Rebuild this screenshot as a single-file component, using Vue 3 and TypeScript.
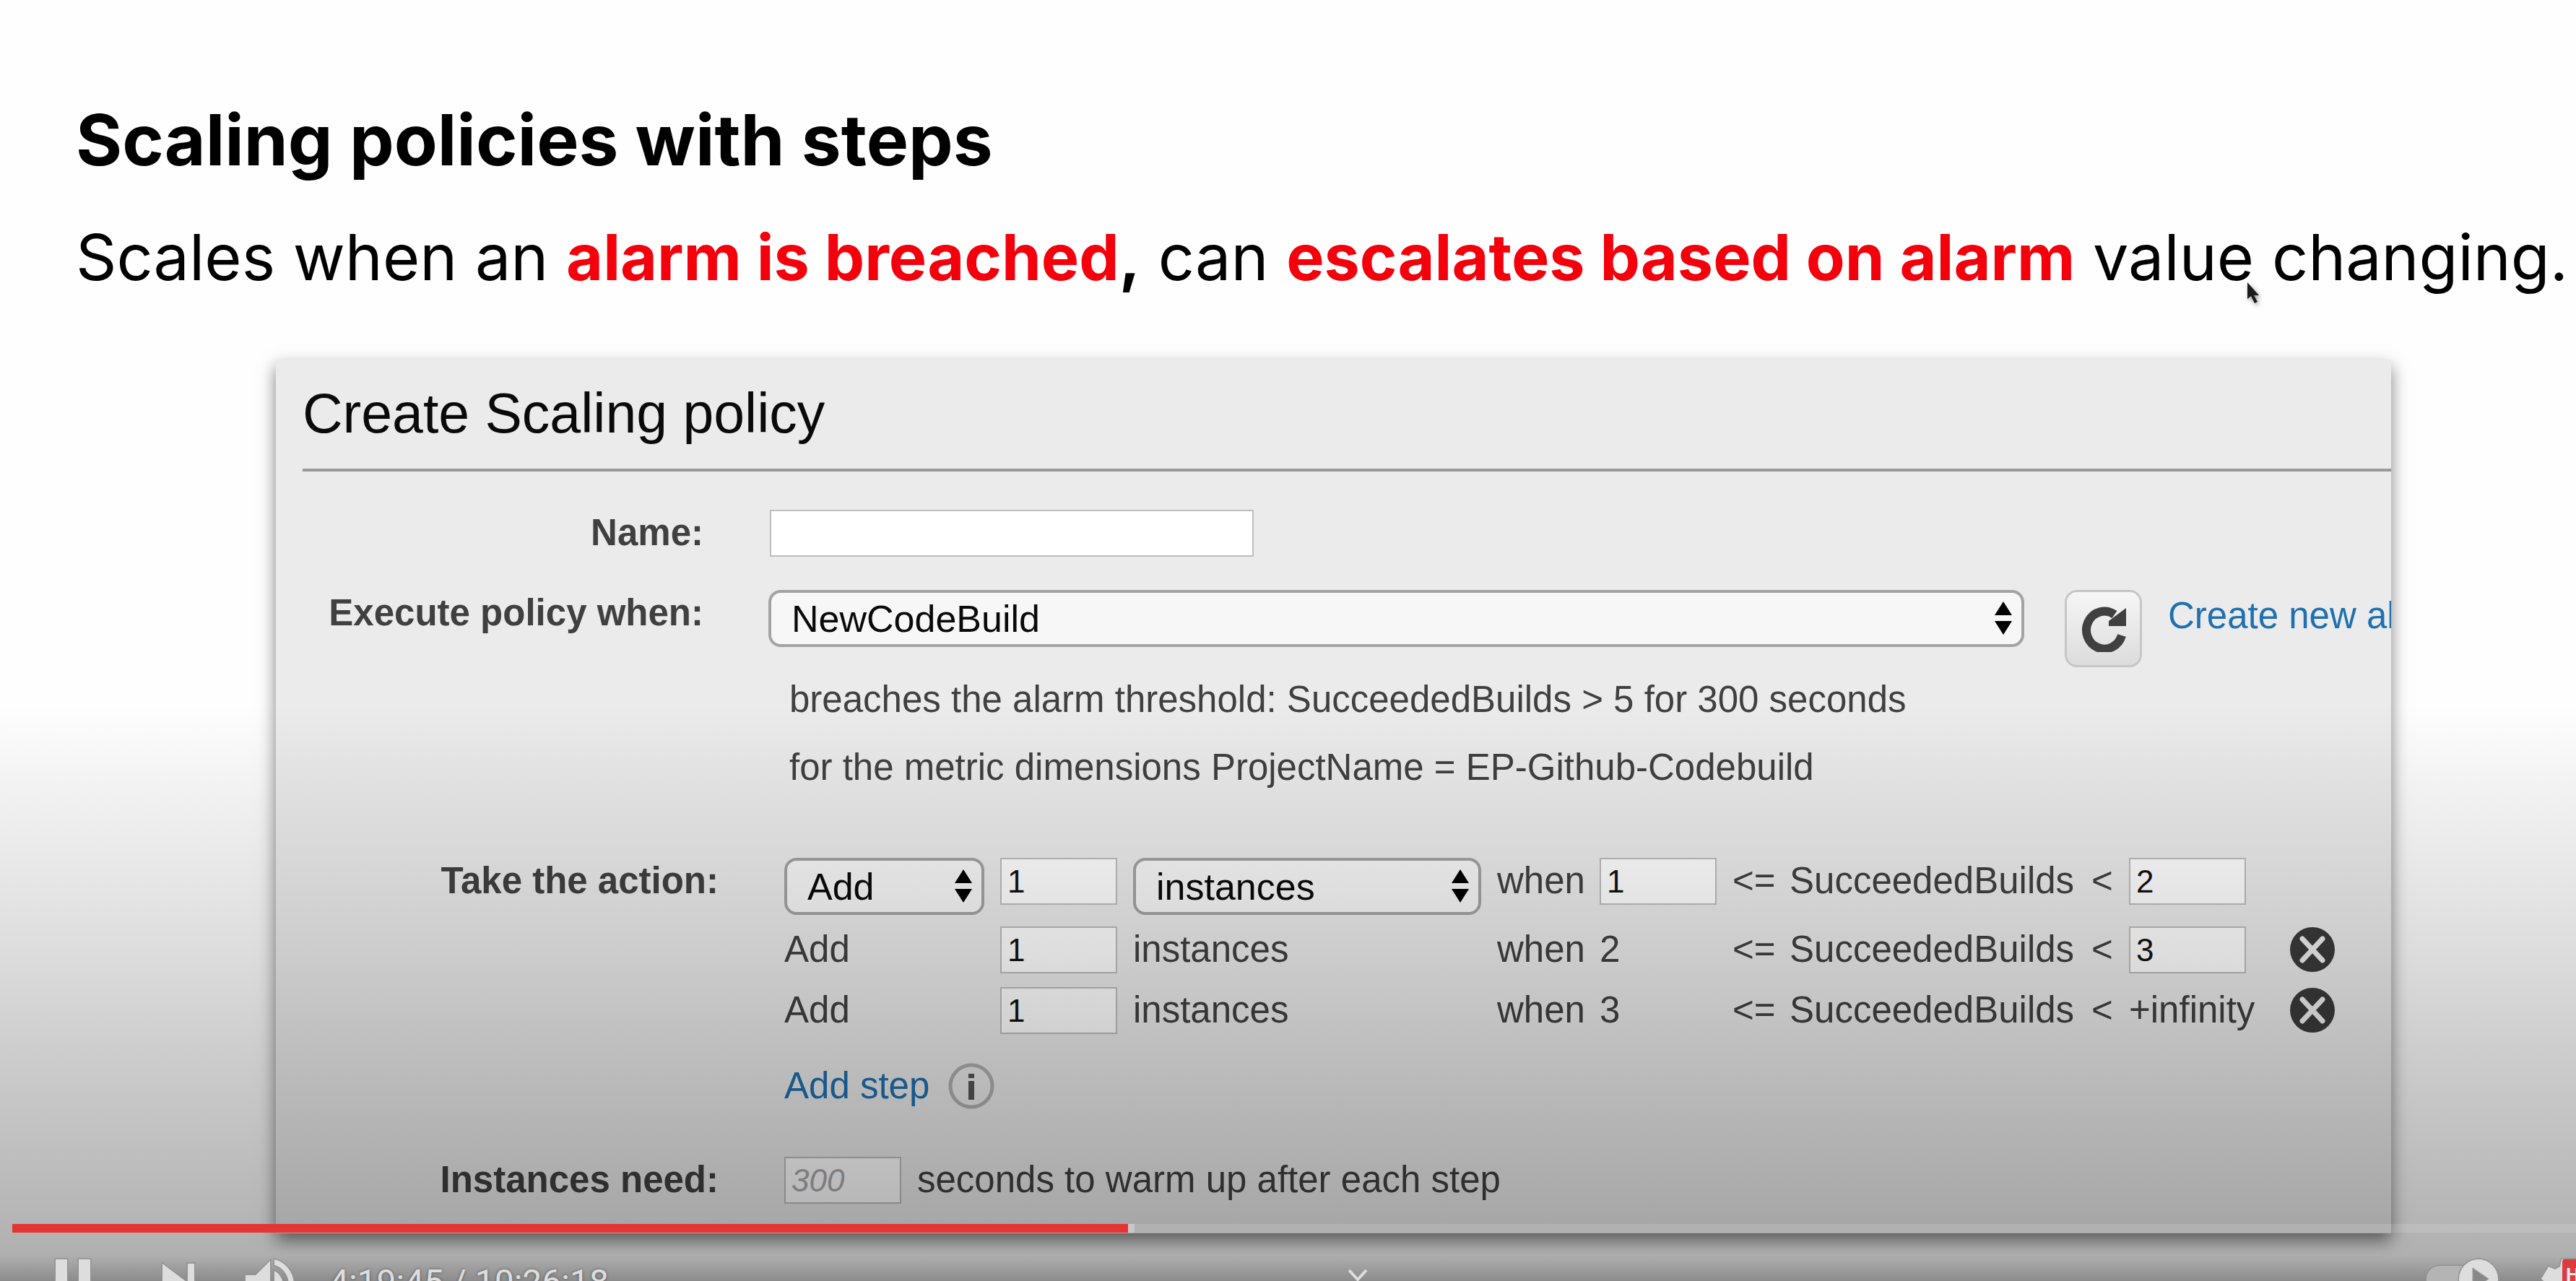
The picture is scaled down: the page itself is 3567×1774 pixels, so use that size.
<script setup lang="ts">
import { ref } from 'vue'

interface Step {
  id: number
  amount: string
  lower: string
  upper: string
  first: boolean
  last: boolean
}

const policyName = ref('')
const alarm = ref('NewCodeBuild')
const action = ref('Add')
const unit = ref('instances')
const warmup = ref('')
const metric = 'SucceededBuilds'

const steps = ref<Step[]>([
  { id: 1, amount: '1', lower: '1', upper: '2', first: true, last: false },
  { id: 2, amount: '1', lower: '2', upper: '3', first: false, last: false },
  { id: 3, amount: '1', lower: '3', upper: '+infinity', first: false, last: true },
])

const played = 43.52
const loaded = 43.77
</script>

<template>
  <main class="player">
    <article class="slide">
      <h1>Scaling policies with steps</h1>
      <p class="lead">
        Scales when an <b class="hot">alarm is breached</b><b>,</b> can
        <b class="hot">escalates based on alarm</b> value changing.
      </p>

      <form class="panel" @submit.prevent>
        <h2>Create Scaling policy</h2>

        <div class="row name-row">
          <label class="label" for="name">Name:</label>
          <input id="name" v-model="policyName" class="box name" type="text" />
        </div>

        <div class="row alarm-row">
          <label class="label" for="alarm">Execute policy when:</label>
          <span class="select alarm">
            <select id="alarm" v-model="alarm"><option>NewCodeBuild</option></select>
            <svg class="arrows" viewBox="0 0 24 46"><path d="M12 0 24 19H0zM12 46 0 27h24z" /></svg>
          </span>
          <button class="refresh" type="button" aria-label="Refresh">
            <svg viewBox="0 0 62 64">
              <path d="M56 41A25 26 0 1 1 46 12" fill="none" stroke="#404040" stroke-width="12" />
              <path d="M62 3v25H38v-7z" fill="#404040" />
            </svg>
          </button>
          <a class="create" href="#">Create new alarm</a>
        </div>

        <div class="details">
          <p>breaches the alarm threshold: SucceededBuilds &gt; 5 for 300 seconds</p>
          <p>for the metric dimensions ProjectName = EP-Github-Codebuild</p>
        </div>

        <div class="row action-row">
          <span class="label wide">Take the action:</span>
          <div class="steps">
            <div v-for="step in steps" :key="step.id" class="step" :class="{ first: step.first }">
              <span v-if="step.first" class="select">
                <select v-model="action" aria-label="Action"><option>Add</option></select>
                <svg class="arrows" viewBox="0 0 24 46"><path d="M12 0 24 19H0zM12 46 0 27h24z" /></svg>
              </span>
              <span v-else>{{ action }}</span>
              <input v-model="step.amount" class="box" type="text" aria-label="Amount" />
              <span v-if="step.first" class="select">
                <select v-model="unit" aria-label="Unit"><option>instances</option></select>
                <svg class="arrows" viewBox="0 0 24 46"><path d="M12 0 24 19H0zM12 46 0 27h24z" /></svg>
              </span>
              <span v-else>{{ unit }}</span>
              <span>when</span>
              <input v-if="step.first" v-model="step.lower" class="box" type="text" aria-label="Lower bound" />
              <span v-else>{{ step.lower }}</span>
              <span>&lt;=</span>
              <span>{{ metric }}</span>
              <span>&lt;</span>
              <span v-if="step.last">{{ step.upper }}</span>
              <input v-else v-model="step.upper" class="box" type="text" aria-label="Upper bound" />
              <button v-if="!step.first" class="remove" type="button" aria-label="Remove step">
                <svg viewBox="0 0 64 64">
                  <circle cx="32" cy="32" r="31" fill="#3a3a3a" />
                  <path d="M18 17 46 47M46 17 18 47" stroke="#eee" stroke-width="7" stroke-linecap="round" />
                </svg>
              </button>
            </div>
          </div>
        </div>

        <div class="add-row">
          <a href="#">Add step</a>
          <svg class="info" viewBox="0 0 64 64">
            <circle cx="32" cy="32" r="29" fill="none" stroke="#b0b0b0" stroke-width="5" />
            <path d="M32 15v6M32 25v26" stroke="#555" stroke-width="8" />
          </svg>
        </div>

        <div class="row warm-row">
          <label class="label wide" for="warmup">Instances need:</label>
          <input id="warmup" v-model="warmup" class="box warm" type="text" placeholder="300" />
          <span class="after">seconds to warm up after each step</span>
        </div>
      </form>
    </article>

    <div class="scrim"></div>

    <svg class="cursor" viewBox="0 0 18 30">
      <path d="M1 0v23l5-4 5 10 4-2-5-9h7z" fill="#1c1c1c" />
    </svg>

    <div class="chrome">
      <div class="track">
        <div class="loaded" :style="{ width: loaded + '%' }"></div>
        <div class="played" :style="{ width: played + '%' }"></div>
      </div>
      <div class="controls">
        <button type="button" class="icon pause" aria-label="Pause">
          <svg viewBox="0 0 48 68"><path d="M0 0h16v68H0zM32 0h16v68H32z" /></svg>
        </button>
        <button type="button" class="icon next" aria-label="Next">
          <svg viewBox="0 0 44 50"><path d="M0 0 33 25 0 50zM35 0h9v50h-9z" /></svg>
        </button>
        <button type="button" class="icon volume" aria-label="Mute">
          <svg viewBox="0 0 65 68">
            <path d="M0 22h14L34 2v64L14 46H0z" />
            <path d="M40 16a20 20 0 0 1 0 36zM40 0a35 35 0 0 1 0 68v-8a27 27 0 0 0 0-52z" />
          </svg>
        </button>
        <span class="time">4:19:45 / 10:26:18</span>
        <svg class="chevron" viewBox="0 0 28 18"><path d="M2 2 14 15 26 2" fill="none" stroke="#ddd" stroke-width="4" /></svg>
        <button type="button" class="icon autoplay" aria-label="Autoplay">
          <svg viewBox="0 0 100 54">
            <rect class="rail" x="0" y="9" width="84" height="36" rx="18" />
            <circle cx="72" cy="27" r="27" />
            <path class="tri" d="M65 14 84 27 65 40z" />
          </svg>
        </button>
        <button type="button" class="icon gear" aria-label="Settings">
          <svg viewBox="0 0 80 80">
            <path
              fill-rule="evenodd"
              d="M30 0h20l2 10 7 4 9-4 10 17-8 7v12l8 7-10 17-9-4-7 4-2 10H30l-2-10-7-4-9 4L2 53l8-7V34l-8-7L12 10l9 4 7-4zM40 26a14 14 0 1 0 0 28 14 14 0 0 0 0-28z"
            />
          </svg>
          <span class="hd">HD</span>
        </button>
      </div>
    </div>
  </main>
</template>

<style>
body {
  margin: 0;
}
</style>

<style scoped>
* {
  box-sizing: border-box;
}
.player {
  position: relative;
  height: 100vh;
  overflow: hidden;
  background: #fefefe;
  font-family: 'Liberation Sans', Arial, sans-serif;
  font-size: 51px;
  line-height: 64px;
  color: #404040;
}
.slide {
  padding-top: 132px;
}
h1,
.lead {
  margin: 0 0 0 105px;
  font-family: Inter, 'Open Sans', sans-serif;
  color: #000;
  white-space: nowrap;
}
h1 {
  font-size: 98px;
  line-height: 124px;
}
.lead {
  margin-top: 40px;
  font-size: 88px;
  line-height: 120px;
}
.hot {
  color: #f3000c;
}
.panel {
  margin: 82px 256px 0 382px;
  padding: 30px 0 41px 37px;
  overflow: hidden;
  background: #ebebeb;
  box-shadow: 0 10px 22px rgba(0, 0, 0, 0.5);
}
h2 {
  margin: 0;
  padding-bottom: 33px;
  border-bottom: 4px solid #999;
  font-size: 77px;
  font-weight: 400;
  line-height: 88px;
  color: #0a0a0a;
}
.row {
  display: flex;
  align-items: flex-start;
}
.label {
  flex: none;
  width: 555px;
  font-weight: 700;
  text-align: right;
}
.label.wide {
  width: 576px;
}
.box {
  width: 162px;
  height: 65px;
  padding: 0 8px;
  border: 2px solid #bdbdbd;
  border-radius: 0;
  background: #fff;
  font: 44px 'Liberation Sans', Arial, sans-serif;
  color: #111;
}
.box::placeholder {
  font-style: italic;
  color: #aaa;
}
.name-row {
  margin-top: 53px;
}
.name {
  width: 670px;
  margin-left: 92px;
}
.alarm-row {
  margin-top: 46px;
}
.select {
  position: relative;
  display: block;
  height: 79px;
}
.select select {
  width: 100%;
  height: 100%;
  padding: 0 28px;
  appearance: none;
  border: 4px solid #a3a3a3;
  border-radius: 17px;
  background: #f7f7f7;
  font: 52px 'Liberation Sans', Arial, sans-serif;
  color: #0a0a0a;
}
.arrows {
  position: absolute;
  top: 16px;
  right: 17px;
  width: 24px;
  height: 46px;
}
.alarm {
  flex: 1;
  margin-left: 90px;
}
.refresh {
  flex: none;
  width: 107px;
  height: 107px;
  margin: 0 36px 0 56px;
  padding: 16px 20px;
  border: 3px solid #c6c6c6;
  border-radius: 17px;
  background: linear-gradient(#f6f6f6, #dcdcdc);
}
.refresh svg {
  display: block;
  width: 62px;
  height: 64px;
}
a {
  color: #1f70b0;
  text-decoration: none;
}
.create {
  flex: none;
  width: 309px;
  margin-top: 4px;
  overflow: hidden;
  white-space: nowrap;
}
.details {
  margin: 13px 0 0 674px;
}
.details p {
  margin: 0 0 30px;
}
.action-row {
  margin-top: 93px;
}
.steps {
  margin-left: 91px;
}
.step {
  display: grid;
  grid-template-columns: 277px 162px 482px 120px 162px 57px 396px 30px 200px 64px;
  column-gap: 22px;
  align-items: start;
  height: 84px;
}
.step.first {
  height: 95px;
}
.step > span {
  white-space: nowrap;
}
.remove {
  width: 64px;
  height: 64px;
  padding: 0;
  border: 0;
  background: none;
}
.remove svg,
.info {
  display: block;
  width: 64px;
  height: 64px;
}
.add-row {
  display: flex;
  gap: 26px;
  margin: 21px 0 0 667px;
}
.warm-row {
  margin-top: 66px;
}
.warm {
  margin-left: 91px;
}
.after {
  margin-left: 22px;
}
.scrim {
  position: absolute;
  inset: 0;
  background: linear-gradient(
    transparent 55%,
    rgba(0, 0, 0, 0.05) 62%,
    rgba(0, 0, 0, 0.13) 74%,
    rgba(0, 0, 0, 0.2) 83%,
    rgba(0, 0, 0, 0.285) 95%,
    rgba(0, 0, 0, 0.31) 98%,
    rgba(0, 0, 0, 0.45)
  );
  pointer-events: none;
}
.cursor {
  position: absolute;
  top: 391px;
  left: 3111px;
  width: 18px;
  height: 30px;
  filter: drop-shadow(2px 3px 3px rgba(0, 0, 0, 0.4));
}
.chrome {
  position: absolute;
  right: 0;
  bottom: 0;
  left: 17px;
  height: 79px;
}
.track {
  position: relative;
  height: 12px;
  background: rgba(255, 255, 255, 0.13);
}
.loaded,
.played {
  position: absolute;
  top: 0;
  bottom: 0;
  left: 0;
}
.loaded {
  background: rgba(255, 255, 255, 0.3);
}
.played {
  background: #e53434;
}
.controls {
  display: flex;
  align-items: flex-start;
  height: 67px;
  padding: 37px 0 0 60px;
  overflow: hidden;
}
.icon {
  flex: none;
  padding: 0;
  border: 0;
  background: none;
}
.icon svg {
  display: block;
  width: 100%;
  overflow: visible;
  fill: #ddd;
  stroke: #929292;
  stroke-width: 3px;
  paint-order: stroke;
}
.pause {
  width: 48px;
}
.next {
  width: 44px;
  margin: 6px 0 0 100px;
}
.volume {
  width: 65px;
  margin-left: 71px;
}
.time {
  flex: none;
  margin: 4px 0 0 51px;
  font-family: Roboto, sans-serif;
  font-size: 48px;
  line-height: 56px;
  color: #ddd;
  text-shadow: 0 0 4px rgba(0, 0, 0, 0.4);
}
.chevron {
  flex: none;
  width: 28px;
  height: 18px;
  margin: 13px auto 0 1023px;
}
.autoplay {
  width: 100px;
}
.autoplay .rail {
  fill: #b4b4b4;
}
.autoplay .tri {
  fill: #888;
}
.gear {
  position: relative;
  width: 80px;
  margin: 0 -30px 0 57px;
}
.hd {
  position: absolute;
  top: 0;
  left: 31px;
  width: 60px;
  height: 40px;
  padding-left: 5px;
  border-radius: 3px;
  background: #dc3c3e;
  font: 700 26px/42px 'Liberation Sans', Arial, sans-serif;
  text-align: left;
  color: #eee;
}
</style>
